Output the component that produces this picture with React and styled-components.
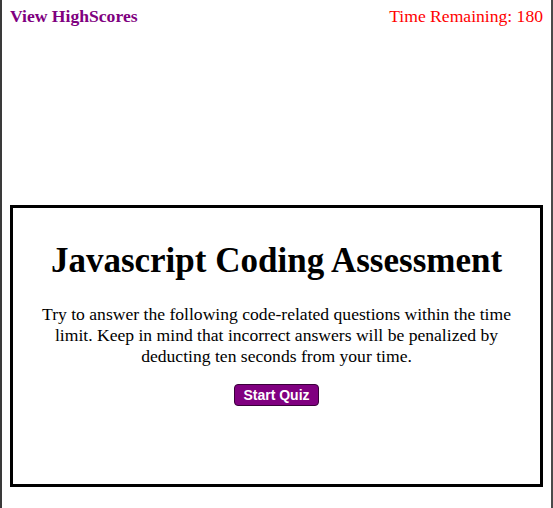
import React from "react";
import styled, { createGlobalStyle } from "styled-components";

const Global = createGlobalStyle`
  html, body { margin: 0; padding: 0; background: #fff; }
  body { font-family: "Liberation Serif", "Times New Roman", serif; }
`;

const Page = styled.div`
  box-sizing: border-box;
  width: 553px;
  min-height: 508px;
  border-left: 2px solid #3a3a3a;
  border-right: 2px solid #4a4a4a;
  padding: 0 8px;
`;

const Header = styled.header`
  display: flex;
  justify-content: space-between;
  align-items: baseline;
  padding-top: 6px;
  font-size: 17.6px;
`;

const ScoresLink = styled.a`
  color: #800080;
  font-weight: bold;
  text-decoration: none;
`;

const Timer = styled.span`
  color: red;
`;

const Card = styled.section`
  margin-top: 178px;
  height: 282px;
  box-sizing: border-box;
  border: 3px solid #000;
  text-align: center;
  padding: 0 24px;
`;

const Title = styled.h1`
  font-size: 35px;
  margin: 33px 0 23px;
`;

const Intro = styled.p`
  font-size: 17.6px;
  line-height: 21px;
  margin: 0 0 17px;
`;

const StartButton = styled.button`
  background: #800080;
  color: #fff;
  font-family: "Liberation Sans", Arial, sans-serif;
  font-weight: bold;
  font-size: 14px;
  border: 1px solid #3a003a;
  border-radius: 4px;
  padding: 2px 8px 2px;
`;

export default function App() {
  return (
    <>
      <Global />
      <Page>
        <Header>
          <ScoresLink href="#">View HighScores</ScoresLink>
          <Timer>Time Remaining: 180</Timer>
        </Header>
        <Card>
          <Title>Javascript Coding Assessment</Title>
          <Intro>
            Try to answer the following code-related questions within the time
            limit. Keep in mind that incorrect answers will be penalized by
            deducting ten seconds from your time.
          </Intro>
          <StartButton>Start Quiz</StartButton>
        </Card>
      </Page>
    </>
  );
}
